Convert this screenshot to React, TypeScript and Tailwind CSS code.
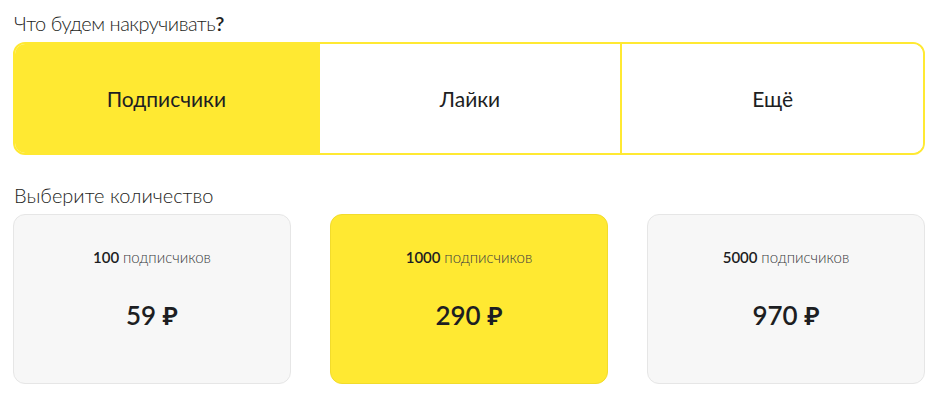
import { useState } from "react";

// Tabs and quantity options
const tabs = ["Подписчики", "Лайки", "Ещё"];

const packages = [
  { count: "100", label: "подписчиков", price: "59 ₽" },
  { count: "1000", label: "подписчиков", price: "290 ₽" },
  { count: "5000", label: "подписчиков", price: "970 ₽" },
];

export default function App() {
  const [tab, setTab] = useState(0);
  const [selected, setSelected] = useState(1);

  return (
    <div
      className="w-[938px] h-[407px] bg-white px-[13px] pt-[9px] text-[#1d1e22] overflow-hidden"
      style={{ fontFamily: "Lato, 'Noto Sans', sans-serif" }}
    >
      <h2 className="text-[20px] leading-[28px] font-light tracking-[-0.5px] mb-[5px] pl-[1px]">
        Что будем накручивать<span className="font-semibold">?</span>
      </h2>

      <div className="grid grid-cols-3 h-[113px] border-2 border-[#ffe932] rounded-[12px] overflow-hidden">
        {tabs.map((t, i) => (
          <button
            key={t}
            onClick={() => setTab(i)}
            className={`flex items-center justify-center text-[21px] font-normal ${
              i > 0 ? "border-l-2 border-[#ffe932]" : ""
            } ${tab === i ? "bg-[#ffe932]" : "bg-white"}`}
          >
            {t}
          </button>
        ))}
      </div>

      <h2 className="text-[20px] leading-[28px] font-light mt-[26px] mb-[5px] pl-[1px]">
        Выберите количество
      </h2>

      <div className="grid grid-cols-3 gap-[39px]">
        {packages.map((p, i) => (
          <button
            key={p.count}
            onClick={() => setSelected(i)}
            className={`h-[170px] rounded-[12px] border flex flex-col items-center pt-[32px] ${
              selected === i
                ? "bg-[#ffe932] border-[#f2dc2c]"
                : "bg-[#f7f7f7] border-[#e6e6e6]"
            }`}
          >
            <div className="text-[15px] leading-[20px]">
              <span className="font-semibold">{p.count}</span>{" "}
              <span className="font-light text-[#3a3b40]">{p.label}</span>
            </div>
            <div className="mt-[32px] text-[26px] leading-[32px] font-semibold">
              {p.price}
            </div>
          </button>
        ))}
      </div>
    </div>
  );
}
